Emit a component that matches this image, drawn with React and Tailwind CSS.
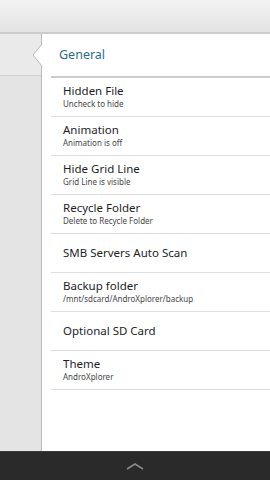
import React from 'react';

const items = [
    { title: "Hidden File", sub: "Uncheck to hide" },
    { title: "Animation", sub: "Animation is off" },
    { title: "Hide Grid Line", sub: "Grid Line is visible" },
    { title: "Recycle Folder", sub: "Delete to Recycle Folder" },
    { title: "SMB Servers Auto Scan" },
    { title: "Backup folder", sub: "/mnt/sdcard/AndroXplorer/backup" },
    { title: "Optional SD Card" },
    { title: "Theme", sub: "AndroXplorer" },
];

const App = () => {
    return (
        <div className="w-[270px] h-[480px] flex flex-col overflow-hidden bg-white" style={{ fontFamily: '"Noto Sans", "Open Sans", sans-serif' }}>
            <div className="h-[34px] shrink-0 bg-gradient-to-b from-[#f3f3f3] to-[#e3e3e3] border-b-2 border-[#cdcdcd]"></div>
            <div className="flex-1 flex min-h-0">
                <div className="w-[42px] shrink-0 bg-[#e4e4e4] border-r border-[#b9b9b9] flex flex-col">
                    <div className="h-[42px] bg-[#eaeaea] border-b border-[#d0d0d0]"></div>
                </div>
                <div className="flex-1 relative bg-white">
                    <svg className="absolute left-[-10px] top-[10px]" width="11" height="22" viewBox="0 0 11 22">
                        <path d="M11 0 L10 0 L1 11 L10 22 L11 22 Z" fill="#ffffff" />
                        <path d="M10 0 L1 11 L10 22" fill="none" stroke="#b9b9b9" strokeWidth="1" />
                    </svg>
                    <div className="h-[44px] ml-[9px] pl-[8px] flex items-center border-b-2 border-[#cccccc]">
                        <span className="text-[12.5px] text-[#2d6d8c]">General</span>
                    </div>
                    {items.map((item) => (
                        <div key={item.title} className="h-[39px] ml-[9px] pl-[12px] border-b border-[#dedede] flex flex-col justify-center">
                            <div className="text-[11.5px] leading-[14px] text-[#1e1e1e]">{item.title}</div>
                            {item.sub && <div className="text-[8px] leading-[12px] text-[#474747]">{item.sub}</div>}
                        </div>
                    ))}
                </div>
            </div>
            <div className="h-[29px] shrink-0 bg-[#2a2a2a] border-t border-[#3c3c3c] flex items-center justify-center">
                <svg width="20" height="8" viewBox="0 0 20 8">
                    <path d="M2 7 L10 2 L18 7" fill="none" stroke="#8a8a8a" strokeWidth="1.5" />
                </svg>
            </div>
        </div>
    );
};

export default App;
